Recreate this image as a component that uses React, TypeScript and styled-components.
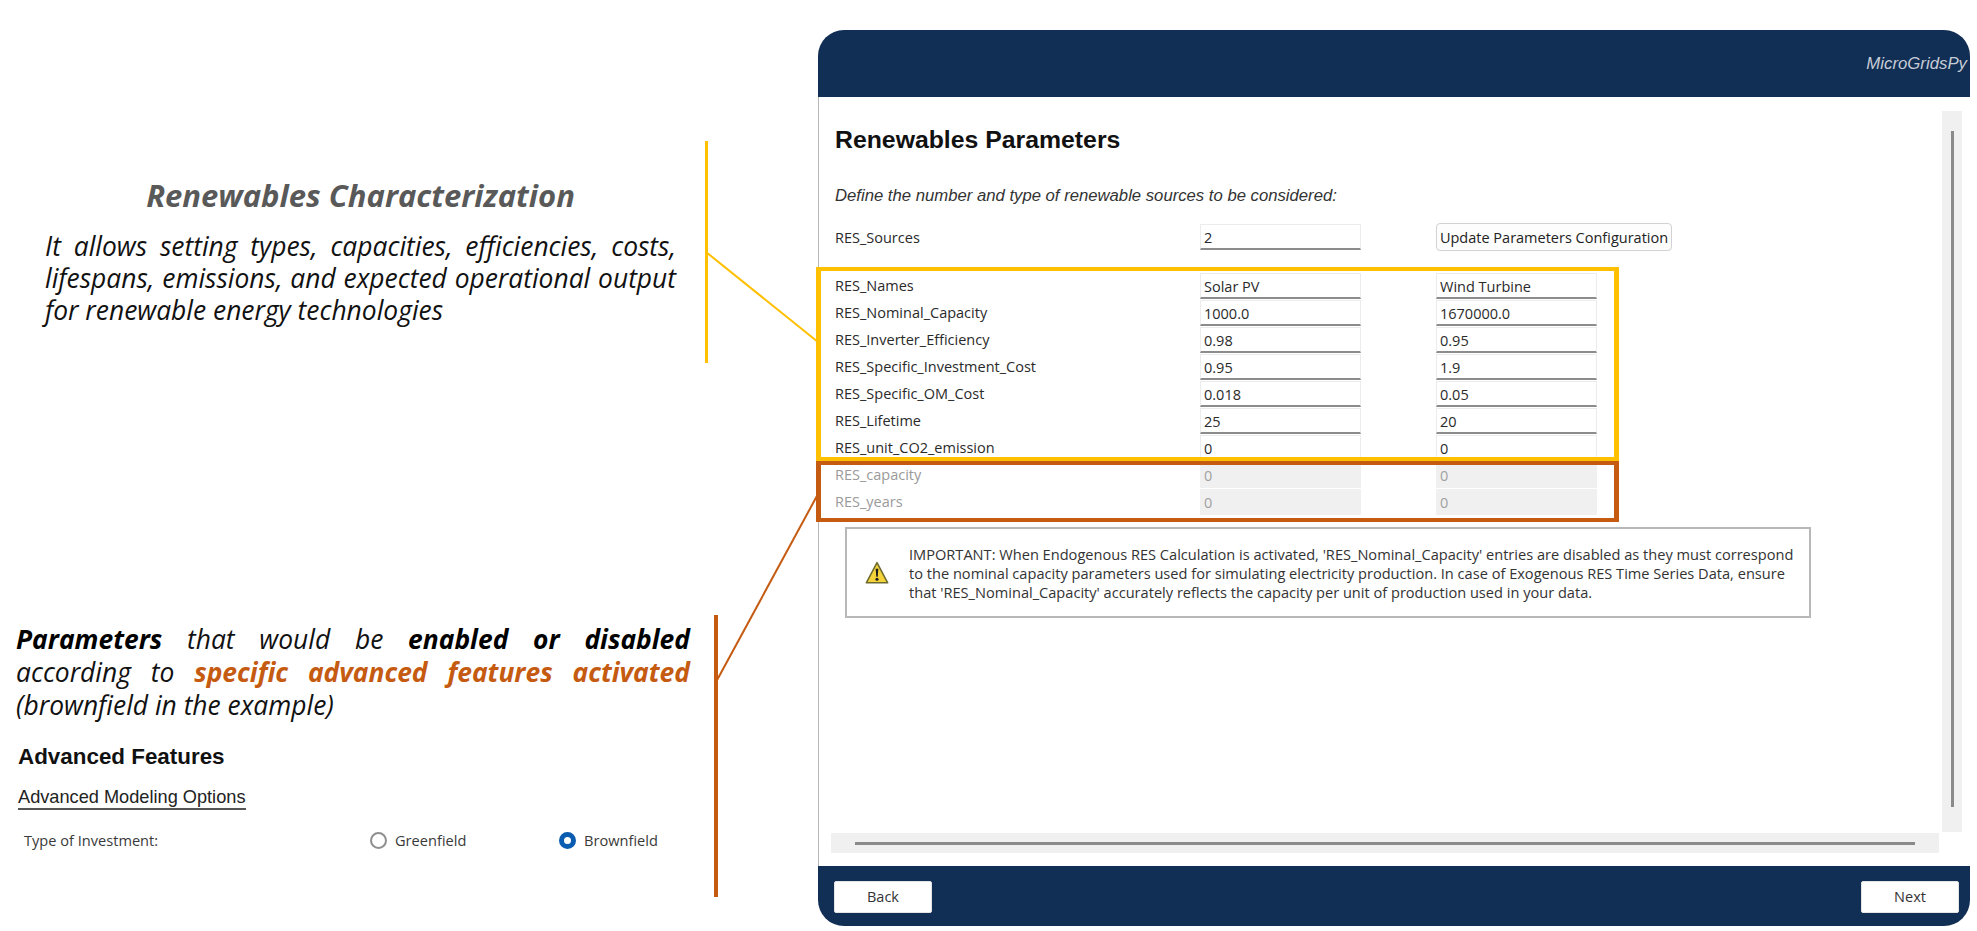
import * as React from 'react';
import styled, { createGlobalStyle } from 'styled-components';

const UI_FONT = `"Open Sans", "Noto Sans", sans-serif`;
const ARIAL = `"Liberation Sans", Arial, sans-serif`;
const NAVY = '#112e55';
const YELLOW = '#ffc000';
const BROWN = '#c55a11';

const GlobalStyle = createGlobalStyle`
  html, body { margin: 0; padding: 0; background: #fff; }
  * { box-sizing: border-box; }
`;

const Page = styled.main`
  position: relative;
  display: flex;
  width: 1977px;
  height: 931px;
  overflow: hidden;
  font-family: ${UI_FONT};
`;

const Connectors = styled.svg`
  position: absolute;
  top: 0;
  left: 0;
  pointer-events: none;
`;

const Notes = styled.section`
  display: flex;
  flex-direction: column;
  width: 718px;
  padding-top: 141px;
`;

const CharacterizationNote = styled.div`
  width: 708px;
  height: 222px;
  padding: 34px 29px 0 45px;
  border-right: 3px solid ${YELLOW};
`;

const NoteTitle = styled.h2`
  margin: 0 0 15px;
  font-size: 31px;
  line-height: 40px;
  font-weight: 700;
  font-style: italic;
  text-align: center;
  color: #595959;
`;

const NoteText = styled.p`
  margin: 0;
  font-size: 26.4px;
  line-height: 32px;
  font-style: italic;
  text-align: justify;
  color: #111;
`;

const FeaturesNote = styled.div`
  width: 718px;
  height: 282px;
  margin-top: 252px;
  padding: 8px 24px 0 16px;
  border-right: 4px solid ${BROWN};
`;

const FeatureText = styled(NoteText)`
  line-height: 33px;
  strong { font-weight: 700; color: #000; }
  em { font-weight: 700; color: ${BROWN}; }
`;

const JustifiedLine = styled.span`
  display: block;
  text-align-last: justify;
`;

const FeaturesTitle = styled.h3`
  margin: 22px 0 0 2px;
  font-family: ${ARIAL};
  font-size: 22.4px;
  line-height: 26px;
  font-weight: 700;
  color: #111;
`;

const OptionsTab = styled.div`
  display: inline-block;
  margin: 16px 0 0 2px;
  font-family: ${ARIAL};
  font-size: 18.2px;
  line-height: 22px;
  color: #222;
  border-bottom: 2px solid #555;
`;

const InvestmentRow = styled.div`
  display: grid;
  grid-template-columns: 346px 189px auto;
  align-items: center;
  height: 20px;
  margin: 20px 0 0 8px;
  font-size: 14.6px;
  color: #3a3a3a;
`;

const RadioOption = styled.label`
  display: flex;
  align-items: center;
  gap: 8px;
`;

const RadioDot = styled.span<{ $checked?: boolean }>`
  width: 17px;
  height: 17px;
  border-radius: 50%;
  background: #fff;
  border: ${(p) => (p.$checked ? '5px solid #0a5cb0' : '2px solid #8f8f8f')};
`;

const AppWindow = styled.section`
  display: flex;
  flex-direction: column;
  width: 1152px;
  height: 896px;
  margin: 30px 0 0 100px;
  background: #fff;
`;

const Header = styled.header`
  display: flex;
  align-items: center;
  justify-content: flex-end;
  height: 67px;
  padding: 0 3px 0 0;
  background: ${NAVY};
  border-radius: 26px 26px 0 0;
`;

const Brand = styled.span`
  font-family: ${ARIAL};
  font-size: 16.8px;
  font-style: italic;
  color: #c6ccd6;
`;

const Body = styled.div`
  display: flex;
  flex-direction: column;
  flex: 1;
  min-height: 0;
  border-left: 1px solid #b8b8b8;
`;

const ScrollArea = styled.div`
  display: flex;
  flex: 1;
  min-height: 0;
`;

const Content = styled.div`
  flex: 1;
  padding-top: 30px;
`;

const Heading = styled.h1`
  margin: 0 0 0 16px;
  font-family: ${ARIAL};
  font-size: 24.8px;
  line-height: 26px;
  font-weight: 700;
  color: #111;
`;

const Hint = styled.p`
  margin: 33px 0 0 16px;
  font-family: ${ARIAL};
  font-size: 16.7px;
  line-height: 20px;
  font-style: italic;
  color: #333;
`;

const Row = styled.div`
  display: grid;
  grid-template-columns: 290px 161px 161px;
  column-gap: 75px;
  align-items: center;
  height: 27px;
  padding-left: 16px;
`;

const SourcesRow = styled(Row)`
  grid-template-columns: 290px 161px 236px;
  margin-top: 17px;
`;

const Rows = styled.div`
  position: relative;
  margin-top: 22px;
`;

const Label = styled.span<{ $disabled?: boolean }>`
  font-size: 14.5px;
  color: ${(p) => (p.$disabled ? '#9a9a9a' : '#2a2a2a')};
`;

const Field = styled.div<{ $disabled?: boolean }>`
  height: 26px;
  padding: 0 3px;
  font-size: 14.5px;
  line-height: 25px;
  color: ${(p) => (p.$disabled ? '#a0a0a0' : '#2a2a2a')};
  background: ${(p) => (p.$disabled ? '#f0f0f0' : '#fff')};
  border: 1px solid ${(p) => (p.$disabled ? '#f0f0f0' : '#ececec')};
  border-bottom: ${(p) => (p.$disabled ? '1px solid #f0f0f0' : '2px solid #8c8c8c')};
`;

const UpdateButton = styled.button`
  height: 28px;
  padding: 0;
  font-family: ${UI_FONT};
  font-size: 14.5px;
  color: #222;
  background: #fdfdfd;
  border: 1px solid #d2d2d2;
  border-radius: 4px;
`;

const Highlight = styled.div<{ $color: string; $top: number; $height: number }>`
  position: absolute;
  left: -3px;
  top: ${(p) => p.$top}px;
  width: 803px;
  height: ${(p) => p.$height}px;
  border: solid ${(p) => p.$color};
  border-width: 4px 5px;
  pointer-events: none;
`;

const Notice = styled.div`
  display: flex;
  align-items: center;
  gap: 20px;
  width: 966px;
  height: 91px;
  margin: 12px 0 0 26px;
  padding-left: 18px;
  border: 2px solid #b8b8b8;
`;

const NoticeText = styled.p`
  margin: 2px 0 0;
  width: 892px;
  font-size: 14.6px;
  line-height: 19px;
  color: #333;
`;

const VerticalTrack = styled.div`
  display: flex;
  justify-content: center;
  width: 20px;
  margin: 14px 8px 1px 0;
  padding: 20px 0 25px;
  background: #f0f0f0;
`;

const VerticalThumb = styled.div`
  width: 3px;
  background: #8a8a8a;
`;

const HorizontalTrack = styled.div`
  display: flex;
  align-items: center;
  width: 1108px;
  height: 20px;
  margin: 0 0 13px 12px;
  padding: 0 24px;
  background: #f0f0f0;
`;

const HorizontalThumb = styled.div`
  flex: 1;
  height: 3px;
  background: #8a8a8a;
`;

const Footer = styled.footer`
  display: flex;
  align-items: center;
  justify-content: space-between;
  height: 60px;
  padding: 1px 11px 0 16px;
  background: ${NAVY};
  border-radius: 0 0 26px 26px;
`;

const NavButton = styled.button`
  width: 98px;
  height: 32px;
  padding: 0;
  font-family: ${UI_FONT};
  font-size: 14.5px;
  color: #333;
  background: #fff;
  border: 1px solid #e4e4e4;
  border-radius: 2px;
`;

const WarningIcon = () => (
  <svg width="24" height="24" viewBox="0 0 22 22">
    <path d="M11 1.5 L20.8 20 H1.2 Z" fill="#f3d23a" stroke="#6b6a30" strokeWidth="1.4" strokeLinejoin="round" />
    <path d="M9.8 7 H12.2 L11.7 14.5 H10.3 Z" fill="#1c1c1c" />
    <circle cx="11" cy="16.8" r="1.4" fill="#1c1c1c" />
  </svg>
);

const parameterRows = [
  { name: 'RES_Names', values: ['Solar PV', 'Wind Turbine'] },
  { name: 'RES_Nominal_Capacity', values: ['1000.0', '1670000.0'] },
  { name: 'RES_Inverter_Efficiency', values: ['0.98', '0.95'] },
  { name: 'RES_Specific_Investment_Cost', values: ['0.95', '1.9'] },
  { name: 'RES_Specific_OM_Cost', values: ['0.018', '0.05'] },
  { name: 'RES_Lifetime', values: ['25', '20'] },
  { name: 'RES_unit_CO2_emission', values: ['0', '0'] },
  { name: 'RES_capacity', values: ['0', '0'], disabled: true },
  { name: 'RES_years', values: ['0', '0'], disabled: true },
];

export default function App() {
  return (
    <Page>
      <GlobalStyle />

      <Notes>
        <CharacterizationNote>
          <NoteTitle>Renewables Characterization</NoteTitle>
          <NoteText>
            It allows setting types, capacities, efficiencies, costs, lifespans, emissions, and expected
            operational output for renewable energy technologies
          </NoteText>
        </CharacterizationNote>

        <FeaturesNote>
          <FeatureText>
            <JustifiedLine>
              <strong>Parameters</strong> that would be <strong>enabled or disabled</strong>
            </JustifiedLine>
            <JustifiedLine>
              according to <em>specific advanced features activated</em>
            </JustifiedLine>
            (brownfield in the example)
          </FeatureText>
          <FeaturesTitle>Advanced Features</FeaturesTitle>
          <OptionsTab>Advanced Modeling Options</OptionsTab>
          <InvestmentRow>
            <span>Type of Investment:</span>
            <RadioOption>
              <RadioDot />
              Greenfield
            </RadioOption>
            <RadioOption>
              <RadioDot $checked />
              Brownfield
            </RadioOption>
          </InvestmentRow>
        </FeaturesNote>
      </Notes>

      <AppWindow>
        <Header>
          <Brand>MicroGridsPy</Brand>
        </Header>

        <Body>
          <ScrollArea>
            <Content>
              <Heading>Renewables Parameters</Heading>
              <Hint>Define the number and type of renewable sources to be considered:</Hint>

              <SourcesRow>
                <Label>RES_Sources</Label>
                <Field>2</Field>
                <UpdateButton>Update Parameters Configuration</UpdateButton>
              </SourcesRow>

              <Rows>
                {parameterRows.map((row) => (
                  <Row key={row.name}>
                    <Label $disabled={row.disabled}>{row.name}</Label>
                    {row.values.map((value, i) => (
                      <Field key={i} $disabled={row.disabled}>
                        {value}
                      </Field>
                    ))}
                  </Row>
                ))}
                <Highlight $color={YELLOW} $top={-5} $height={194} />
                <Highlight $color={BROWN} $top={189} $height={61} />
              </Rows>

              <Notice>
                <WarningIcon />
                <NoticeText>
                  IMPORTANT: When Endogenous RES Calculation is activated, 'RES_Nominal_Capacity' entries are
                  disabled as they must correspond to the nominal capacity parameters used for simulating
                  electricity production. In case of Exogenous RES Time Series Data, ensure that
                  'RES_Nominal_Capacity' accurately reflects the capacity per unit of production used in your data.
                </NoticeText>
              </Notice>
            </Content>

            <VerticalTrack>
              <VerticalThumb />
            </VerticalTrack>
          </ScrollArea>

          <HorizontalTrack>
            <HorizontalThumb />
          </HorizontalTrack>
        </Body>

        <Footer>
          <NavButton>Back</NavButton>
          <NavButton>Next</NavButton>
        </Footer>
      </AppWindow>

      <Connectors width="1977" height="931">
        <line x1="706" y1="252" x2="818" y2="342" stroke={YELLOW} strokeWidth="2" />
        <line x1="716" y1="682" x2="818" y2="494" stroke={BROWN} strokeWidth="2" />
      </Connectors>
    </Page>
  );
}
